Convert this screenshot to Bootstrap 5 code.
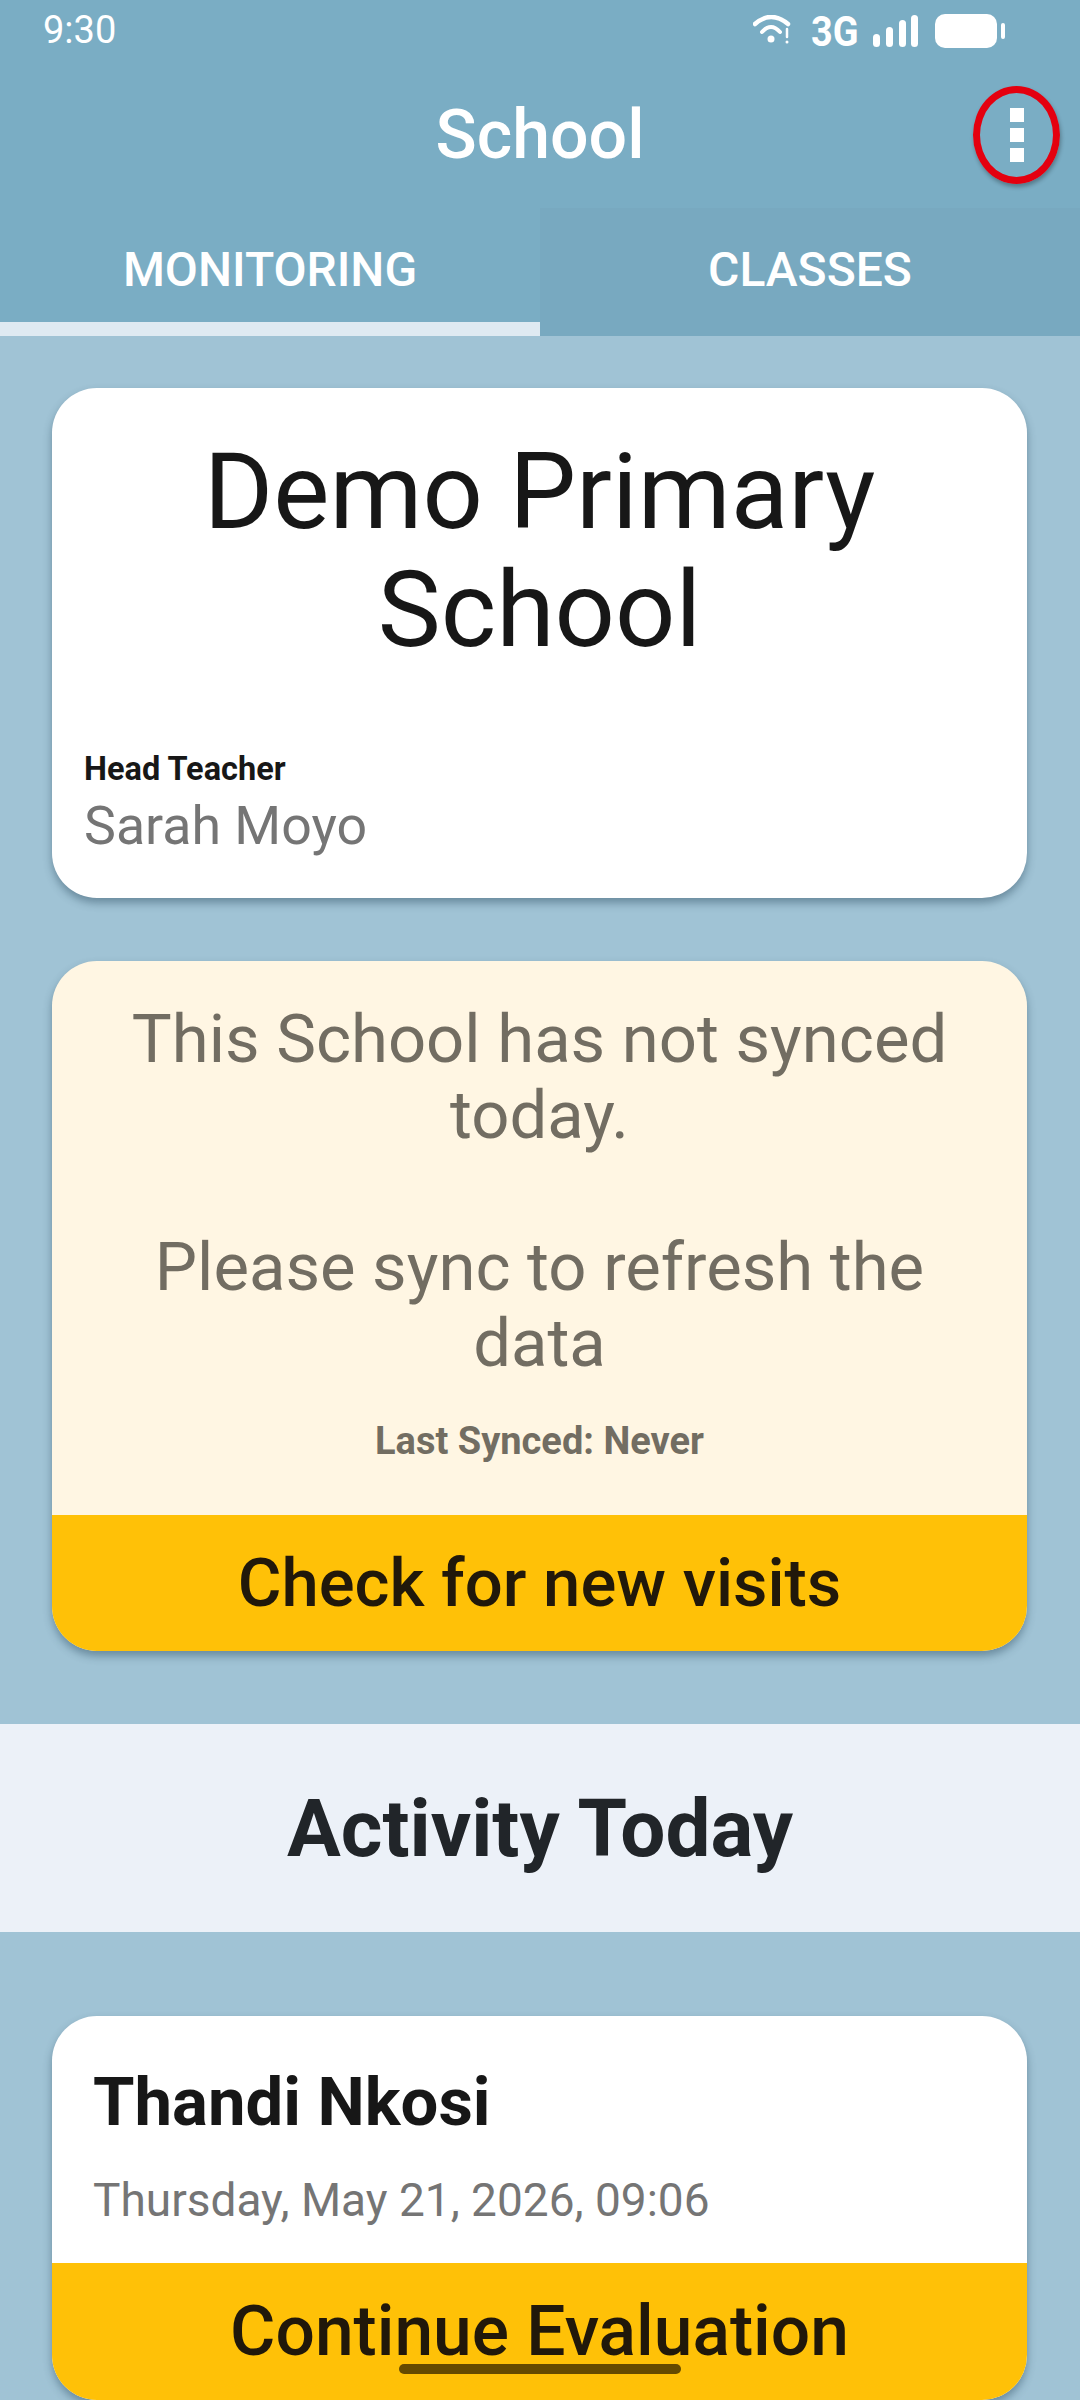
<!DOCTYPE html>
<html lang="en">
<head>
  <meta charset="UTF-8" />
  <meta name="viewport" content="width=device-width, initial-scale=1" />
  <title>School</title>
  <link href="https://cdn.jsdelivr.net/npm/bootstrap@5.3.2/dist/css/bootstrap.min.css" rel="stylesheet" />
  <style>
    html, body { height: 2400px; overflow: hidden; }
    body { background: #a0c3d5; font-family: Roboto, "Liberation Sans", sans-serif; position: relative; }
    .top-head { background: #7aadc4; color: #fff; }
    .status-row { height: 62px; padding: 0 75px 0 43px; }
    .clock { font-size: 38px; line-height: 1; padding-bottom: 2px; }
    .net-label { font-size: 43px; font-weight: 700; line-height: 1; width: 46px; margin: 0 16px 0 20px; transform: scaleX(.88); transform-origin: left center; }
    .title-row { height: 146px; position: relative; }
    .app-title { font-size: 68px; font-weight: 500; line-height: 1; margin: 0; }
    .menu-ring { position: absolute; left: 973px; top: 24px; width: 87px; height: 98px; border: 7px solid #e4000f; border-radius: 50%; background: none; padding: 0; box-shadow: 1px 3px 4px rgba(0,0,0,.3); gap: 6px; }
    .menu-ring span { width: 14px; height: 14px; background: #fff; display: block; }
    .tab-item { width: 540px; height: 128px; color: #fff; font-size: 48px; font-weight: 500; line-height: 1; padding-top: 9px; }
    .tab-on { border-bottom: 14px solid #dfeaf2; }
    .tab-off { background: #78a9c0; padding-bottom: 14px; }
    .page-body { padding: 52px 53px 0 52px; }
    .soft-card { border-radius: 45px; border: 0; overflow: hidden; box-shadow: 0 5px 8px rgba(40,70,90,.45); }
    .school-card { height: 510px; padding: 45px 32px 0; margin-bottom: 63px; }
    .school-name { font-size: 106px; font-weight: 400; line-height: 118px; color: #171717; margin: 0 0 81px; }
    .field-label { font-size: 32.5px; font-weight: 700; line-height: 38px; color: #171717; margin-bottom: 6px; }
    .field-value { font-size: 53.7px; line-height: 64px; color: #757575; }
    .sync-card { height: 690px; background: #fff6e3; margin-bottom: 73px; }
    .sync-text { height: 554px; padding: 40px 50px 0; color: #726d62; }
    .sync-text p { font-size: 67px; line-height: 76px; margin: 0; }
    .sync-text .sync-gap { margin-top: 76px; }
    .sync-last { font-size: 38px; font-weight: 700; line-height: 44px; margin-top: 38px; }
    .amber-btn { background: #ffc107; border: 0; border-radius: 0; color: #21180a; font-weight: 500; line-height: 1; width: 100%; }
    .sync-btn { height: 136px; font-size: 67px; }
    .activity-band { height: 208px; background: #ecf1f8; color: #212529; font-size: 80px; font-weight: 700; line-height: 1; margin-bottom: 84px; padding-top: 2px; }
    .visit-wrap { padding: 0 53px 0 52px; }
    .visit-card { height: 384px; }
    .visit-info { height: 247px; padding: 50px 41px 0; }
    .visit-name { font-size: 67px; font-weight: 700; line-height: 72px; color: #171717; margin: 0 0 36px; }
    .visit-date { font-size: 46px; line-height: 52px; color: #757575; }
    .visit-btn { height: 137px; padding-bottom: 6px; font-size: 69.5px; }
    .home-bar { position: absolute; left: 399px; top: 2364px; width: 282px; height: 10px; border-radius: 5px; background: #654a00; }
  </style>
</head>
<body>
  <div class="top-head">
    <div class="status-row d-flex align-items-center justify-content-between">
      <span class="clock">9:30</span>
      <div class="d-flex align-items-center">
        <svg width="38" height="32" viewBox="0 0 38 32" fill="none" stroke="#fff" stroke-linecap="round">
          <path d="M2 9 Q18 -5 35 9" stroke-width="4.5"/>
          <path d="M9 17 Q18 7 27 17" stroke-width="4"/>
          <circle cx="18" cy="24" r="3.5" fill="#fff" stroke="none"/>
          <path d="M34 14 V22" stroke-width="2.5"/>
          <circle cx="34" cy="27" r="1.5" fill="#fff" stroke="none"/>
        </svg>
        <span class="net-label">3G</span>
        <svg width="46" height="32" viewBox="0 0 46 32" fill="#fff">
          <rect x="0" y="19" width="7" height="13" rx="3.5"/>
          <rect x="13" y="12" width="7" height="20" rx="3.5"/>
          <rect x="26" y="5" width="7" height="27" rx="3.5"/>
          <rect x="38" y="0" width="7" height="32" rx="3.5"/>
        </svg>
        <svg class="ms-3" width="70" height="34" viewBox="0 0 70 34" fill="#fff">
          <rect x="0" y="0" width="62" height="34" rx="10"/>
          <rect x="66" y="9" width="4" height="16" rx="2"/>
        </svg>
      </div>
    </div>
    <div class="title-row d-flex align-items-center justify-content-center">
      <h1 class="app-title">School</h1>
      <button type="button" class="menu-ring d-flex flex-column align-items-center justify-content-center" aria-label="Menu">
        <span></span><span></span><span></span>
      </button>
    </div>
    <div class="d-flex">
      <div class="tab-item tab-on d-flex align-items-center justify-content-center">MONITORING</div>
      <div class="tab-item tab-off d-flex align-items-center justify-content-center">CLASSES</div>
    </div>
  </div>

  <div class="page-body">
    <div class="card soft-card school-card">
      <h2 class="school-name text-center">Demo Primary School</h2>
      <div class="field-label">Head Teacher</div>
      <div class="field-value">Sarah Moyo</div>
    </div>

    <div class="card soft-card sync-card">
      <div class="sync-text text-center">
        <p>This School has not synced today.</p>
        <p class="sync-gap">Please sync to refresh the data</p>
        <div class="sync-last">Last Synced: Never</div>
      </div>
      <button type="button" class="btn amber-btn sync-btn">Check for new visits</button>
    </div>
  </div>

  <div class="activity-band d-flex align-items-center justify-content-center">Activity Today</div>

  <div class="visit-wrap">
    <div class="card soft-card visit-card">
      <div class="visit-info">
        <h3 class="visit-name">Thandi Nkosi</h3>
        <div class="visit-date">Thursday, May 21, 2026, 09:06</div>
      </div>
      <button type="button" class="btn amber-btn visit-btn">Continue Evaluation</button>
    </div>
  </div>
  <div class="home-bar"></div>
  <script src="https://cdn.jsdelivr.net/npm/bootstrap@5.3.2/dist/js/bootstrap.bundle.min.js"></script>
</body>
</html>
